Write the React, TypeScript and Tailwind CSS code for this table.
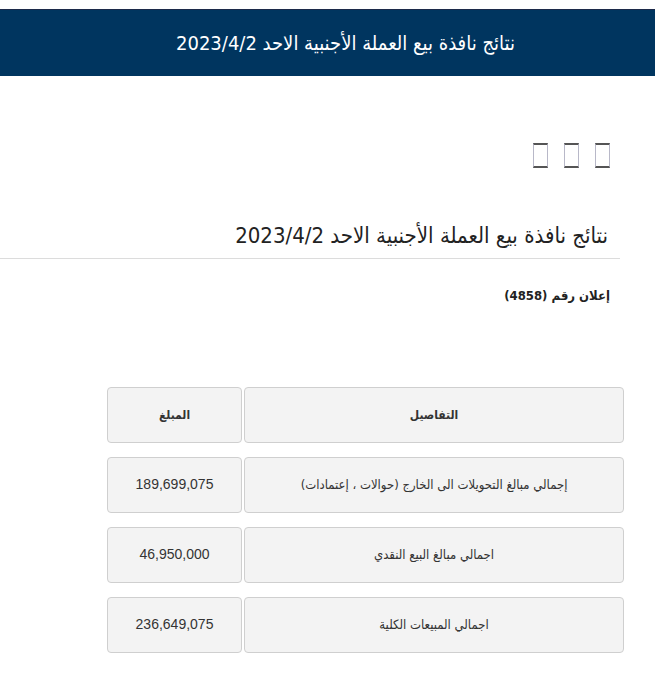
import React from "react";

const rows = [
  { d: "إجمالي مبالغ التحويلات الى الخارج (حوالات ، إعتمادات)", a: "189,699,075" },
  { d: "اجمالي مبالغ البيع النقدي", a: "46,950,000" },
  { d: "اجمالي المبيعات الكلية", a: "236,649,075" },
];

const cond = { fontFamily: '"DejaVu Sans Condensed", "DejaVu Sans", sans-serif' };

function Tofu() {
  return (
    <span className="inline-block w-[15px] h-[25px] border-x border-x-[#b8b8c8] border-y-2 border-y-[#555]"></span>
  );
}

function Cell({ children, className }: { children: React.ReactNode; className: string }) {
  return (
    <div
      className={
        "h-[56px] flex items-center justify-center bg-[#f3f3f3] border border-[#cfcfcf] rounded-[4px] " +
        className
      }
    >
      {children}
    </div>
  );
}

export default function App() {
  return (
    <div dir="rtl" className="w-[655px] min-h-[700px] bg-white pt-[9px]" style={cond}>
      <div className="h-[67px] bg-[#00355f] border-t border-[#1c2a4a] flex items-center justify-center pl-[36px]">
        <span className="text-white text-[20px]" style={cond}>
          نتائج نافذة بيع العملة الأجنبية الاحد 2023/4/2
        </span>
      </div>

      <div className="mr-[45px] mt-[67px] flex gap-[16px]">
        <Tofu />
        <Tofu />
        <Tofu />
      </div>

      <div className="mr-[35px] mt-[51px] border-b border-[#dcdcdc] pr-[12px] pb-[5px]">
        <h1 className="text-[22px] text-[#222] leading-[34px]" style={cond}>
          نتائج نافذة بيع العملة الأجنبية الاحد 2023/4/2
        </h1>
      </div>

      <div className="mr-[45px] mt-[27px] text-[13px] font-bold text-[#222]">إعلان رقم (4858)</div>

      <div className="mr-[31px] mt-[81px] w-[517px] flex flex-col gap-[14px] text-[#333]">
        <div className="flex gap-[2px]">
          <Cell className="w-[380px] text-[12px] font-bold">التفاصيل</Cell>
          <Cell className="w-[135px] text-[12px] font-bold">المبلغ</Cell>
        </div>
        {rows.map((r) => (
          <div key={r.a} className="flex gap-[2px]">
            <Cell className="w-[380px] text-[13px]">{r.d}</Cell>
            <Cell className="w-[135px] text-[14px]">
              <span style={{ fontFamily: '"Liberation Sans", Arial, sans-serif' }}>{r.a}</span>
            </Cell>
          </div>
        ))}
      </div>
    </div>
  );
}
